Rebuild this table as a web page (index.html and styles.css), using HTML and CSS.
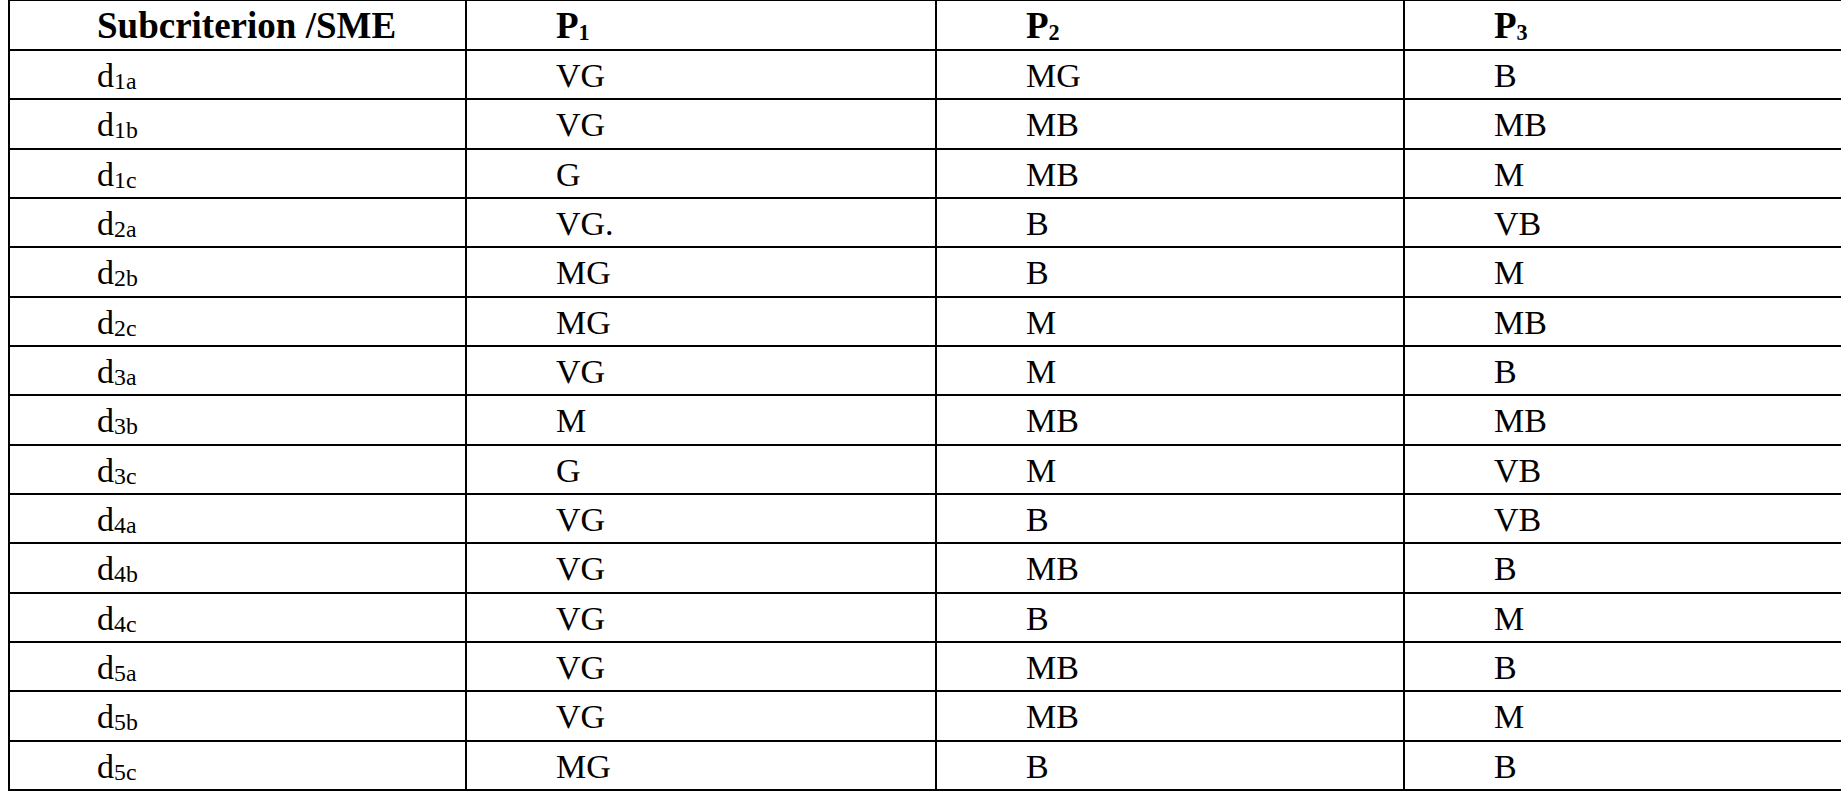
FILE: index.html
```html
<!DOCTYPE html>
<html lang="en">
<head>
<meta charset="utf-8">
<title>Subcriterion / SME ratings</title>
<link rel="stylesheet" href="styles.css">
</head>
<body>
<div class="frame">
<table class="grid">
  <colgroup>
    <col class="c1"><col class="c2"><col class="c3"><col class="c4">
  </colgroup>
  <thead>
    <tr>
      <th>Subcriterion /SME</th>
      <th>P<sub>1</sub></th>
      <th>P<sub>2</sub></th>
      <th>P<sub>3</sub></th>
    </tr>
  </thead>
  <tbody>
    <tr><td>d<sub>1a</sub></td><td>VG</td><td>MG</td><td>B</td></tr>
    <tr><td>d<sub>1b</sub></td><td>VG</td><td>MB</td><td>MB</td></tr>
    <tr><td>d<sub>1c</sub></td><td>G</td><td>MB</td><td>M</td></tr>
    <tr><td>d<sub>2a</sub></td><td>VG.</td><td>B</td><td>VB</td></tr>
    <tr><td>d<sub>2b</sub></td><td>MG</td><td>B</td><td>M</td></tr>
    <tr><td>d<sub>2c</sub></td><td>MG</td><td>M</td><td>MB</td></tr>
    <tr><td>d<sub>3a</sub></td><td>VG</td><td>M</td><td>B</td></tr>
    <tr><td>d<sub>3b</sub></td><td>M</td><td>MB</td><td>MB</td></tr>
    <tr><td>d<sub>3c</sub></td><td>G</td><td>M</td><td>VB</td></tr>
    <tr><td>d<sub>4a</sub></td><td>VG</td><td>B</td><td>VB</td></tr>
    <tr><td>d<sub>4b</sub></td><td>VG</td><td>MB</td><td>B</td></tr>
    <tr><td>d<sub>4c</sub></td><td>VG</td><td>B</td><td>M</td></tr>
    <tr><td>d<sub>5a</sub></td><td>VG</td><td>MB</td><td>B</td></tr>
    <tr><td>d<sub>5b</sub></td><td>VG</td><td>MB</td><td>M</td></tr>
    <tr><td>d<sub>5c</sub></td><td>MG</td><td>B</td><td>B</td></tr>
  </tbody>
</table>
</div>
</body>
</html>
```

FILE: styles.css
```css
html, body {
  margin: 0;
  padding: 0;
  background: #ffffff;
}

body {
  width: 1841px;
  height: 794px;
  overflow: hidden;
  font-family: "Liberation Serif", "Times New Roman", serif;
  color: #000000;
}

.frame {
  padding-left: 8px;
}

.grid {
  border-collapse: separate;
  border-spacing: 0;
  table-layout: fixed;
  width: 1865px;
}

.c1 { width: 459px; }
.c2 { width: 470px; }
.c3 { width: 468px; }
.c4 { width: 468px; }

.grid th,
.grid td {
  box-sizing: border-box;
  text-align: left;
  vertical-align: top;
  padding: 0 0 0 89px;
  border-right: 2px solid #000;
  border-bottom: 2px solid #000;
  white-space: nowrap;
}

.grid th:first-child,
.grid td:first-child {
  border-left: 2px solid #000;
  padding-left: 87px;
}

.grid th {
  height: 51px;
  border-top: 1px solid #000;
  font-weight: bold;
  font-size: 37px;
  line-height: 40px;
  padding-top: 5px;
}

.grid td {
  height: 49.33px;
  font-size: 34px;
  line-height: 38px;
  padding-top: 6px;
}

.grid sub {
  font-size: 0.7em;
  vertical-align: -0.1em;
  line-height: 0;
}

.grid th sub {
  font-size: 0.6em;
}
```
